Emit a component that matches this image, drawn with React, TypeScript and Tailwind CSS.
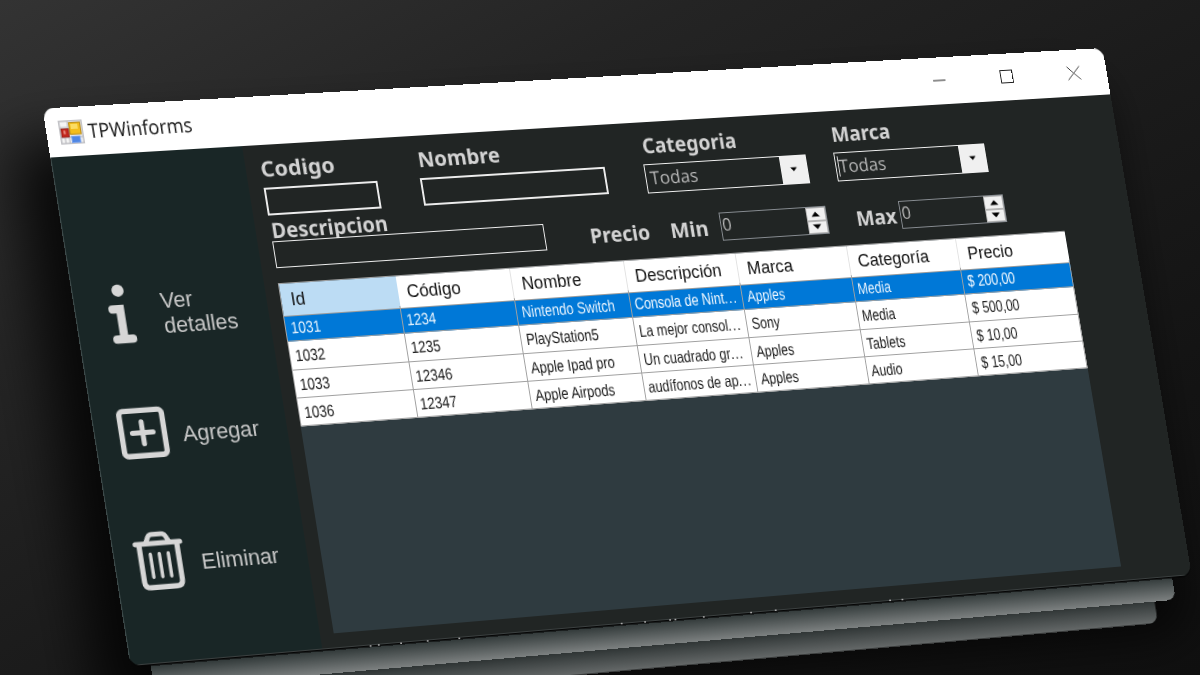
import { ReactNode, useLayoutEffect, useRef, useState } from 'react';

type Point = [number, number];
type Quad = [Point, Point, Point, Point];

/* Projective transform taking a w×h box onto a quad (top-left, top-right, bottom-right, bottom-left). */
function project(w: number, h: number, [p0, p1, p2, p3]: Quad) {
  const dx1 = p1[0] - p2[0];
  const dx2 = p3[0] - p2[0];
  const dx3 = p0[0] - p1[0] + p2[0] - p3[0];
  const dy1 = p1[1] - p2[1];
  const dy2 = p3[1] - p2[1];
  const dy3 = p0[1] - p1[1] + p2[1] - p3[1];
  const det = dx1 * dy2 - dx2 * dy1;
  const g = (dx3 * dy2 - dx2 * dy3) / det;
  const k = (dx1 * dy3 - dx3 * dy1) / det;
  const m = [
    (p1[0] - p0[0] + g * p1[0]) / w, (p1[1] - p0[1] + g * p1[1]) / w, 0, g / w,
    (p3[0] - p0[0] + k * p3[0]) / h, (p3[1] - p0[1] + k * p3[1]) / h, 0, k / h,
    0, 0, 1, 0,
    p0[0], p0[1], 0, 1,
  ];
  return `matrix3d(${m.map((n) => n.toFixed(9)).join(',')})`;
}

/* Single line of text squeezed or stretched to an exact width. */
function Fit({ width, className = '', children }: { width: number; className?: string; children: ReactNode }) {
  const ref = useRef<HTMLSpanElement>(null);
  const [scale, setScale] = useState(1);
  useLayoutEffect(() => {
    if (ref.current) setScale(width / ref.current.offsetWidth);
  }, [width]);
  return (
    <div className={className} style={{ width }}>
      <span ref={ref} className="inline-block origin-left whitespace-nowrap" style={{ transform: `scaleX(${scale})` }}>
        {children}
      </span>
    </div>
  );
}

const labelCls =
  "font-['Noto_Sans','Open_Sans',sans-serif] text-[21.5px] font-bold leading-[29px] h-[28px] text-[#d3d3d3]";

function Label({ width, className = '', children }: { width: number; className?: string; children: ReactNode }) {
  return (
    <Fit width={width} className={`${labelCls} ${className}`}>
      {children}
    </Fit>
  );
}

function Combo({ className, caret }: { className: string; caret?: boolean }) {
  return (
    <div className={`flex h-[30px] border border-[#f0f0f0] ${className}`}>
      <div className="flex flex-1 items-center pl-[4px]">
        {caret && <div className="-ml-[2px] h-[21px] w-px bg-[#d8d8d8]" />}
        <Fit width={51} className="-mt-[2px] font-['Open_Sans',sans-serif] text-[18.5px] leading-[24px] text-[#b9b9b9]">
          Todas
        </Fit>
      </div>
      <div className="flex w-[28px] items-center justify-center bg-[#f0f0f0]">
        <svg width="8" height="5" viewBox="0 0 8 5">
          <path d="M0.3 0.5h7.2L3.9 4.4z" fill="#000" />
        </svg>
      </div>
    </div>
  );
}

function NumberBox() {
  return (
    <div className="mt-[0.5px] flex h-[29px] w-[115px] border border-[#868b90]">
      <Fit
        width={10}
        className="flex-1 pl-px font-['Open_Sans',sans-serif] text-[19px] leading-[23px] text-[#b9b9b9]"
      >
        0
      </Fit>
      <div className="flex w-[21px] flex-col bg-[#f0f0f0]">
        <div className="flex flex-1 items-center justify-center border border-[#b4b4b4] bg-[#f0f0f0]">
          <svg width="10" height="6" viewBox="0 0 10 6">
            <path d="M0.5 5.6h9L5 0.6z" fill="#000" />
          </svg>
        </div>
        <div className="flex flex-1 items-center justify-center border border-[#b4b4b4] bg-[#f0f0f0]">
          <svg width="10" height="6" viewBox="0 0 10 6">
            <path d="M0.5 0.4h9L5 5.4z" fill="#000" />
          </svg>
        </div>
      </div>
    </div>
  );
}

const headers = ['Id', 'Código', 'Nombre', 'Descripción', 'Marca', 'Categoría', 'Precio'];
const rows = [
  ['1031', '1234', 'Nintendo Switch', 'Consola de Nint...', 'Apples', 'Media', '$ 200,00'],
  ['1032', '1235', 'PlayStation5', 'La mejor consol...', 'Sony', 'Media', '$ 500,00'],
  ['1033', '12346', 'Apple Ipad pro', 'Un cuadrado gr...', 'Apples', 'Tablets', '$ 10,00'],
  ['1036', '12347', 'Apple Airpods', 'audífonos de ap...', 'Apples', 'Audio', '$ 15,00'],
];
const cellScale = [
  'scale-x-[0.83]',
  'scale-x-[0.83]',
  'scale-x-[0.82]',
  'scale-x-[0.81]',
  'scale-x-[0.8]',
  'scale-x-[0.8]',
  'scale-x-[0.81]',
];

function DataTable() {
  return (
    <div className="h-[351px] w-[838px] overflow-hidden bg-[#2f3b40] font-['Liberation_Sans',sans-serif]">
      <div className="grid h-[31px] grid-cols-7 border-l border-t border-[#a4a4a4]">
        {headers.map((h, i) => (
          <div
            key={h}
            className={`border-b border-r border-b-[#9a9a9a] pl-[9.5px] text-[17.6px] leading-[32px] text-[#111] ${
              i === 0 ? 'border-r-[#bcdcf4] bg-[#bcdcf4]' : i === 6 ? 'border-r-white bg-white' : 'border-r-[#e2e2e2] bg-white'
            }`}
          >
            {h}
          </div>
        ))}
      </div>
      {rows.map((r, ri) => (
        <div
          key={r[0]}
          className={`grid h-[28.3px] grid-cols-7 border-l border-[#a4a4a4] ${
            ri === 0 ? 'bg-[#0078d7] text-[#f4f9ff]' : 'bg-white text-[#1c1c1c]'
          }`}
        >
          {r.map((c, ci) => (
            <div key={ci} className="overflow-hidden border-b border-r border-[#a0a0a0] pl-[4.5px]">
              <span
                className={`inline-block origin-left whitespace-nowrap text-[16.5px] leading-[28px] ${cellScale[ci]}`}
              >
                {c.replace('...', '')}
                {c.endsWith('...') && <span className="tracking-[1.2px]">...</span>}
              </span>
            </div>
          ))}
        </div>
      ))}
    </div>
  );
}

function AppIcon() {
  return (
    <svg width="24" height="24" viewBox="0 0 24 24">
      <rect x="0.8" y="0.8" width="22.4" height="22.4" fill="#f4f4f4" stroke="#c2c2c6" strokeWidth="1.6" />
      <path d="M9.2 1v22M1 7.2h8M1 17h22M16.6 17v6M5 17v6" stroke="#c2c2c6" strokeWidth="1.3" />
      <rect x="10.6" y="2.6" width="11" height="11.6" fill="#f3bd1c" stroke="#b98a12" strokeWidth="1" />
      <rect x="12" y="4" width="7" height="5" fill="#fbdc62" />
      <rect x="2" y="8.4" width="7.2" height="8.4" fill="#c3271d" stroke="#8f1813" strokeWidth="0.8" />
      <rect x="4.2" y="10.2" width="2" height="3.6" fill="#e88a80" />
      <rect x="11.4" y="16.2" width="8.6" height="6.4" fill="#4f86e4" stroke="#7ea6ee" strokeWidth="0.8" />
    </svg>
  );
}

const menuText = "font-['Liberation_Sans',sans-serif] text-[21.7px] leading-[25px] text-[#c8c8c8]";

function Sidebar() {
  return (
    <div className="flex w-[194px] shrink-0 flex-col border-l border-[#3d4a4a] bg-[#192626] pt-[124px]">
      <div className="flex h-[70px]">
        <svg className="ml-[19px]" width="56" height="70" viewBox="20 173 56 70">
          <circle cx="46" cy="184.8" r="6.1" fill="#d6d6d6" />
          <path d="M38 203.2H45.6V233M38.2 233.2H54" fill="none" stroke="#d6d6d6" strokeWidth="8.2" strokeLinecap="round" />
        </svg>
        <div className={`ml-[11px] pt-[12px] ${menuText}`}>
          Ver
          <br />
          detalles
        </div>
      </div>
      <div className="mt-[54px] flex h-[60px]">
        <svg className="ml-[18.5px]" width="56" height="60" viewBox="20 297 56 60">
          <rect x="27.6" y="304.4" width="42.8" height="44.8" rx="4" fill="none" stroke="#d6d6d6" strokeWidth="5.4" />
          <path d="M48.8 315.8v21.6M38.4 326.6h20.8" stroke="#d6d6d6" strokeWidth="5" strokeLinecap="round" />
        </svg>
        <div className={`ml-[13px] pt-[20.5px] ${menuText}`}>Agregar</div>
      </div>
      <div className="mt-[64px] flex h-[64px]">
        <svg className="ml-[19px]" width="56" height="64" viewBox="20 421 56 64" fill="none" stroke="#d6d6d6" strokeLinecap="round" strokeLinejoin="round">
          <path d="M23.6 435.9H68.4" strokeWidth="5" />
          <path d="M34.5 435l2.6-5.4q1.4-2.4 4-2.4h9.8q2.6 0 4 2.4l2.6 5.4" strokeWidth="4.8" />
          <path d="M27.2 437v36.4q0 6 6 6h26q6 0 6-6V437" strokeWidth="5.2" />
          <path d="M37.2 446.4v22.8M46.2 446.4v22.8M55.2 446.4v22.8" strokeWidth="3.4" />
        </svg>
        <div className={`ml-[11px] pt-[24px] ${menuText}`}>Eliminar</div>
      </div>
    </div>
  );
}

function AppWindow() {
  return (
    <div className="flex h-full w-full flex-col overflow-hidden rounded-[11px] bg-[#212524]">
      <div className="flex h-[49px] shrink-0 items-center bg-white pl-[13px] pr-[29px]">
        <AppIcon />
        <Fit
          width={105}
          className="ml-[5px] mt-[1px] font-['Open_Sans',sans-serif] text-[20px] leading-[28px] text-[#151515]"
        >
          TPWinforms
        </Fit>
        <svg className="-mt-[1.5px] ml-auto" width="164" height="16" viewBox="0 0 164 16" fill="none" stroke="#1a1a1a" strokeWidth="1">
          <path d="M1 8h13.5" />
          <rect x="75.5" y="1.5" width="13" height="13" />
          <path d="M149.5 1.5l14 14M163.5 1.5l-14 14" strokeWidth="0.9" />
        </svg>
      </div>
      <div className="flex flex-1 border-b border-[#3b4040]">
        <Sidebar />
        <div className="flex-1 pl-[14px]">
          <div className="flex pl-px pt-[9px]">
            <div className="w-[117px]">
              <Label width={75.5}>Codigo</Label>
              <div className="mt-[6px] h-[28px] border-2 border-[#ececec]" />
            </div>
            <div className="ml-[44px] w-[194px]">
              <Label width={85} className="ml-[0.5px]">Nombre</Label>
              <div className="mt-[6px] h-[28px] border-2 border-[#ececec]" />
            </div>
            <div className="ml-[41px] w-[174px]">
              <Label width={100.5} className="ml-[1.5px]">Categoria</Label>
              <Combo className="mt-[5.5px]" />
            </div>
            <div className="ml-[29.5px] w-[165px]">
              <Label width={63.5} className="ml-px">Marca</Label>
              <Combo className="mt-[5.5px]" caret />
            </div>
          </div>
          <div className="-mt-[1.5px] flex pl-px">
            <div className="w-[281px]">
              <Label width={119.5} className="ml-[0.5px]">Descripcion</Label>
              <div className="relative -mt-[2px] h-[27px] border border-[#ececec] bg-[#212524]" />
            </div>
            <div className="ml-[45px] flex pt-[25.5px]">
              <Label width={63} className="ml-[1.5px] mr-[22.5px]">Precio</Label>
              <Label width={41} className="mr-[12.5px]">Min</Label>
              <NumberBox />
              <Label width={44.5} className="ml-[31.5px] mr-[3.5px]">Max</Label>
              <NumberBox />
            </div>
          </div>
          <div className="pt-[13px]">
            <DataTable />
          </div>
        </div>
      </div>
    </div>
  );
}

const windowQuad: Quad = [[42.5, 108.5], [1102.5, 48], [1191.7, 575], [130.3, 666]];
const layerQuad: Quad = [[148, 649], [1169, 560], [1175.8, 599.7], [154.5, 689]];
const backLayerQuad: Quad = [[166, 671], [1151.5, 583], [1158, 623], [172.5, 711]];

const specks: Point[] = [
  [370.5, 646], [378.7, 645], [401, 643.3], [427.6, 641], [459.2, 638.4], [621.6, 623.6], [645, 622],
  [670, 620], [675.3, 619.6], [703.7, 617], [751, 612.6], [775.6, 610.3], [890, 600.4], [902.3, 599.6],
];

export default function App() {
  return (
    <div className="relative h-[675px] w-[1200px] overflow-hidden bg-[linear-gradient(152deg,#333333_0%,#242424_28%,#1b1b1b_52%,#131313_78%,#0f0f0f_100%)]">
      <div
        className="absolute left-0 top-0 h-[554px] w-[1122px] origin-top-left rounded-[11px] shadow-[-26px_44px_56px_10px_rgba(0,0,0,0.82)]"
        style={{ transform: project(1122, 554, windowQuad) }}
      />
      <div
        className="absolute left-0 top-0 h-[40px] w-[1080px] origin-top-left rounded-b-[9px] bg-[linear-gradient(180deg,#2a3030_38%,#656969_100%)]"
        style={{ transform: project(1080, 40, backLayerQuad) }}
      />
      <div
        className="absolute left-0 top-0 h-[40px] w-[1080px] origin-top-left rounded-b-[9px] bg-[linear-gradient(180deg,#2c3434_38%,#7c8080_100%)]"
        style={{ transform: project(1080, 40, layerQuad) }}
      />
      <div
        className="absolute left-0 top-0 h-[554px] w-[1122px] origin-top-left rounded-[11px] shadow-[0_1.5px_0_0_#050505]"
        style={{ transform: project(1122, 554, windowQuad) }}
      >
        <AppWindow />
      </div>
      <svg className="absolute left-0 top-0" width="1200" height="675" viewBox="0 0 1200 675">
        {specks.map(([x, y]) => (
          <rect key={x} x={x - 0.8} y={y - 0.8} width="1.8" height="1.5" fill="#a8a8a8" />
        ))}
      </svg>
    </div>
  );
}
